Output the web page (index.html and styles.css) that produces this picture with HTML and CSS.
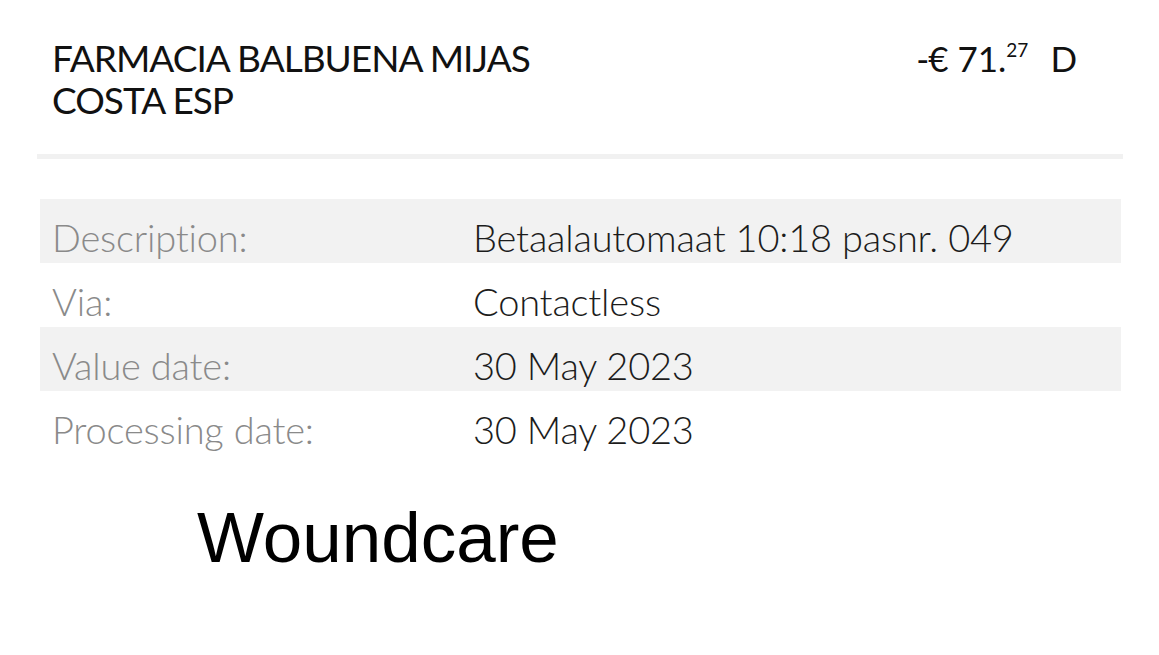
FILE: index.html
```html
<!DOCTYPE html>
<html lang="en">
<head>
<meta charset="utf-8">
<title>Transaction</title>
<link rel="stylesheet" href="styles.css">
</head>
<body>
<main class="page">
  <header class="head">
    <h1 class="merchant">FARMACIA BALBUENA MIJAS<br>COSTA ESP</h1>
    <div class="amount"><span class="minus">-</span>€ 71.<sup class="cents">27</sup><span class="dc">D</span></div>
  </header>
  <div class="divider"></div>
  <dl class="details">
    <div class="row shade"><dt>Description:</dt><dd>Betaalautomaat 10:18 pasnr. 049</dd></div>
    <div class="row"><dt>Via:</dt><dd>Contactless</dd></div>
    <div class="row shade"><dt>Value date:</dt><dd>30 May 2023</dd></div>
    <div class="row"><dt>Processing date:</dt><dd>30 May 2023</dd></div>
  </dl>
  <p class="note">Woundcare</p>
</main>
</body>
</html>
```
FILE: styles.css
```css
html, body { margin: 0; padding: 0; background: #ffffff; }
.page {
  padding-top: 37px;
  font-family: Lato, "Open Sans", sans-serif;
  color: #111;
}
.head {
  display: flex;
  justify-content: space-between;
  align-items: baseline;
  padding: 0 82px 0 52px;
}
.merchant {
  margin: 0;
  font-size: 37px;
  line-height: 42px;
  font-weight: 400;
  letter-spacing: -1px;
}
.amount {
  font-size: 35px;
  line-height: 42px;
  font-weight: 400;
  white-space: nowrap;
}
.minus { margin-right: -1px; }
.cents {
  font-size: 19px;
  vertical-align: 15px;
  line-height: 0;
  margin-right: 22px;
}
.divider {
  margin: 33px 36px 0 37px;
  height: 5px;
  background: #f1f1f1;
}
.details {
  margin: 40px 38px 0 40px;
  padding: 0;
}
.row {
  display: grid;
  grid-template-columns: 433px 1fr;
  height: 64px;
  box-sizing: border-box;
  padding-top: 12px;
  font-size: 38px;
  line-height: 52px;
  font-weight: 300;
  letter-spacing: -0.2px;
  white-space: nowrap;
}
.shade { background: #f2f2f2; }
.row dt { padding-left: 12px; color: #8a8a8a; }
.row dd { margin: 0; color: #1c1c1c; }
.note {
  margin: 43px 0 0 197px;
  font-family: "Liberation Sans", Arial, sans-serif;
  font-size: 71px;
  line-height: 80px;
  color: #000;
}
```
